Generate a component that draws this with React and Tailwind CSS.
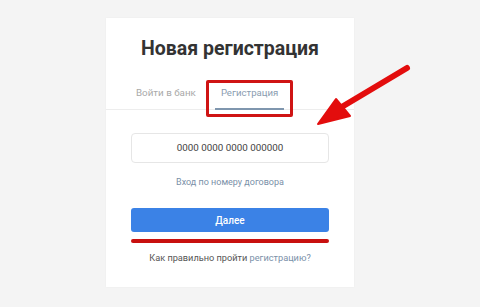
import React from 'react';

const RedArrow = () => (
  <svg className="absolute left-0 top-0" width="480" height="307" viewBox="0 0 480 307">
    <line x1="407" y1="68" x2="340" y2="108" stroke="#e30d0d" strokeWidth="6" strokeLinecap="round" />
    <polygon points="318,124 336,99 350,116" fill="#e30d0d" stroke="#e30d0d" strokeWidth="2" strokeLinejoin="round" />
  </svg>
);

const App = () => {
  return (
    <div className="relative w-[480px] h-[307px] bg-[#f4f4f4] overflow-hidden" style={{ fontFamily: 'Roboto, "Noto Sans", sans-serif' }}>
      <div className="pt-[18px] pl-[106px]">
        {/* CARD */}
        <div className="w-[248px] h-[269px] bg-white shadow-[0_0_2px_rgba(0,0,0,0.04)]">
          <h1 className="pt-[19px] text-center text-[19.5px] leading-[24px] font-bold text-[#333333]">Новая регистрация</h1>

          {/* TABS */}
          <div className="mt-[25px] flex border-b border-[#ededed] h-[24px]">
            <div className="ml-[30px] text-[9.8px] leading-[14px] text-[#a9a9a9]">Войти в банк</div>
            <div className="ml-[19px] px-[6px] border-b-2 border-[#7f96ae] text-[9.6px] leading-[14px] text-[#8a9cb0] -mb-px">Регистрация</div>
          </div>

          <div className="px-[25px]">
            <div className="mt-[23px] h-[30px] rounded-[4px] border border-[#e6e6e6] flex items-center justify-center text-[9.8px] text-[#444444]">
              0000 0000 0000 000000
            </div>
            <div className="mt-[12px] text-center text-[9px] leading-[14px] text-[#7a90a8]">Вход по номеру договора</div>
            <button className="mt-[19px] w-full h-[24px] rounded-[3px] bg-[#3b82e6] text-white text-[10px] font-medium">Далее</button>
            <div className="mt-[7px] h-[4px] rounded-full bg-[#c8100f]" />
            <div className="mt-[8px] text-center text-[9.2px] leading-[14px] text-[#555555]">
              Как правильно пройти <span className="text-[#7a90a8]">регистрацию?</span>
            </div>
          </div>
        </div>
      </div>

      {/* ANNOTATIONS */}
      <div className="absolute left-[206px] top-[80px] w-[87px] h-[37px] border-[3px] border-[#cf1414] rounded-[2px]" />
      <RedArrow />
    </div>
  );
};

export default App;
